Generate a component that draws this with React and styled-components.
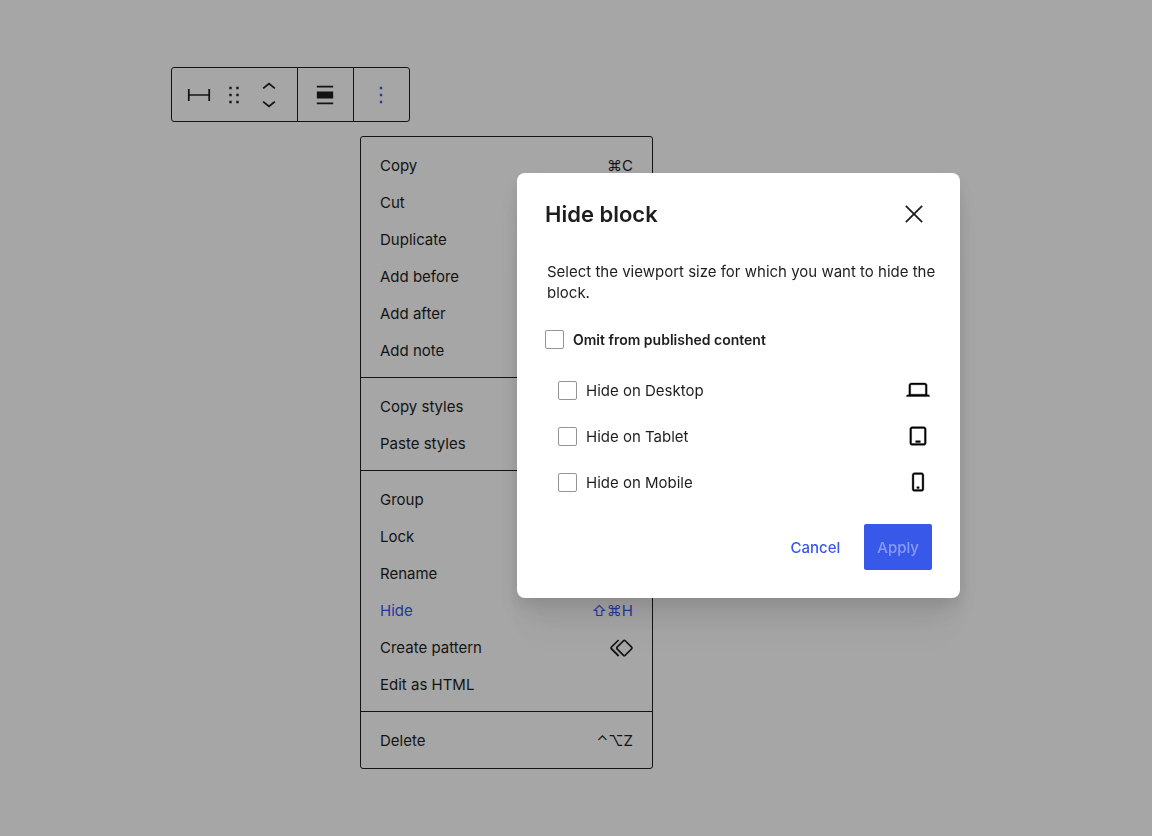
import React, { useState } from "react";
import styled, { createGlobalStyle } from "styled-components";

const GlobalStyle = createGlobalStyle`
  * {
    box-sizing: border-box;
  }

  body {
    margin: 0;
    background-color: #ffffff;
    color: #1e1e1e;
    font-family: Inter, "Liberation Sans", "DejaVu Sans", sans-serif;
    font-size: 15px;
  }

  button, input {
    font: inherit;
    color: inherit;
  }
`;

const Page = styled.main`
  min-height: 100vh;
  padding: 67px 24px 67px 171px;
`;

const Toolbar = styled.div`
  display: flex;
  width: fit-content;
  border: 1px solid #1e1e1e;
  border-radius: 3px;
`;

const ToolbarGroup = styled.div`
  display: flex;
  align-items: center;
  gap: 7px;
  height: 53px;
  padding: 0 14px 0 13px;

  & + & {
    border-left: 1px solid #1e1e1e;
  }
`;

const IconButton = styled.button`
  display: flex;
  padding: 0;
  border: none;
  background: none;
  color: ${({ $active }) => ($active ? "#3858e9" : "inherit")};
  cursor: pointer;
`;

const Movers = styled.div`
  display: flex;
  flex-direction: column;
  gap: 4px;
`;

const Menu = styled.div`
  width: 293px;
  max-width: 100%;
  margin: 14px 0 0 189px;
  border: 1px solid #1e1e1e;
  border-radius: 3px;
`;

const MenuGroup = styled.div`
  padding: 10px 0 8px;

  & + & {
    border-top: 1px solid #1e1e1e;
  }

  &:last-child {
    padding-bottom: 9px;
  }
`;

const MenuItem = styled.button`
  display: flex;
  align-items: center;
  justify-content: space-between;
  width: 100%;
  height: 37px;
  padding: 0 19px;
  border: none;
  background: none;
  color: ${({ $active }) => ($active ? "#3858e9" : "inherit")};
  text-align: left;
  cursor: pointer;
`;

const Overlay = styled.div`
  position: fixed;
  inset: 0;
  display: flex;
  align-items: flex-start;
  padding: 173px 24px 24px 517px;
  background-color: rgba(0, 0, 0, 0.35);
`;

const Dialog = styled.section`
  flex: 0 1 443px;
  padding: 27px 28px 28px;
  border-radius: 8px;
  background-color: #ffffff;
  box-shadow:
    0 5px 15px rgba(0, 0, 0, 0.08),
    0 15px 27px rgba(0, 0, 0, 0.07),
    0 30px 36px rgba(0, 0, 0, 0.04),
    0 50px 43px rgba(0, 0, 0, 0.02);
`;

const DialogHeader = styled.header`
  display: flex;
  align-items: center;
  justify-content: space-between;
  padding-right: 4px;
`;

const DialogTitle = styled.h2`
  margin: 0;
  font-size: 22px;
  font-weight: 600;
  line-height: 28px;
`;

const Description = styled.p`
  margin: 33px -8px 26px 0;
  padding-left: 2px;
  line-height: 21px;
`;

const Options = styled.div`
  display: flex;
  flex-direction: column;
  padding: 17px 0 19px 13px;
`;

const OptionRow = styled.div`
  display: flex;
  align-items: center;
  justify-content: space-between;
  height: 46px;
`;

const CheckLabel = styled.label`
  display: flex;
  align-items: center;
  gap: 9px;
  font-size: ${({ $bold }) => ($bold ? "14px" : "15px")};
  font-weight: ${({ $bold }) => ($bold ? 600 : 400)};
  line-height: 21px;
`;

const Checkbox = styled.input`
  appearance: none;
  width: 19px;
  height: 19px;
  margin: 0;
  border: 1px solid #949494;
  border-radius: 2px;
  background-color: #ffffff;

  &:checked {
    border-color: #3858e9;
    background-color: #3858e9;
  }
`;

const DialogFooter = styled.footer`
  display: flex;
  justify-content: flex-end;
  gap: 11px;
`;

const Button = styled.button`
  height: 46px;
  padding: 0 13px;
  border: none;
  border-radius: 2px;
  background-color: ${({ $primary }) => ($primary ? "#3858e9" : "transparent")};
  color: ${({ $primary }) => ($primary ? "#ffffff" : "#3858e9")};
  font-weight: 500;

  &:disabled {
    color: rgba(255, 255, 255, 0.4);
  }
`;

const DeviceIcon = styled.span`
  display: flex;
  color: #000000;
  stroke: currentColor;
  stroke-width: 0.3;
`;

const icons = {
  width: "M2.5 6.8H4v4.5h16V6.8h1.5v10.4H20v-4.5H4v4.5H2.5z",
  drag: "M8 7h2V5H8v2zm0 6h2v-2H8v2zm0 6h2v-2H8v2zm6-14v2h2V5h-2zm0 8h2v-2h-2v2zm0 6h2v-2h-2v2z",
  up: "M6.5 12.4L12 8l5.5 4.4-.9 1.2L12 10l-4.5 3.6-1-1.2z",
  down: "M17.5 11.6L12 16l-5.5-4.4.9-1.2L12 14l4.5-3.6 1 1.2z",
  align: "M19 5.5H5V4h14v1.5ZM19 20H5v-1.5h14V20ZM5 9h14v6H5V9Z",
  more: "M13 19h-2v-2h2v2zm0-6h-2v-2h2v2zm0-6h-2V5h2v2z",
  close:
    "m13.06 12 6.47-6.47-1.06-1.06L12 10.94 5.53 4.47 4.47 5.53 10.94 12l-6.47 6.47 1.06 1.06L12 13.06l6.47 6.47 1.06-1.06L13.06 12Z",
  desktop:
    "M20.5 16h-.7V8c0-1.1-.9-2-2-2H6.2c-1.1 0-2 .9-2 2v8h-.7c-.8 0-1.5.7-1.5 1.5h20c0-.8-.7-1.5-1.5-1.5zM5.7 8c0-.3.2-.5.5-.5h11.6c.3 0 .5.2.5.5v7.6H5.7V8z",
  tablet:
    "M17 4H7c-1.1 0-2 .9-2 2v12c0 1.1.9 2 2 2h10c1.1 0 2-.9 2-2V6c0-1.1-.9-2-2-2zm.5 14c0 .3-.2.5-.5.5H7c-.3 0-.5-.2-.5-.5V6c0-.3.2-.5.5-.5h10c.3 0 .5.2.5.5v12zm-7.5-.5h4V16h-4v1.5z",
  mobile:
    "M15 4H9c-1.1 0-2 .9-2 2v12c0 1.1.9 2 2 2h6c1.1 0 2-.9 2-2V6c0-1.1-.9-2-2-2zm.5 14c0 .3-.2.5-.5.5H9c-.3 0-.5-.2-.5-.5V6c0-.3.2-.5.5-.5h6c.3 0 .5.2.5.5v12zm-4.5-.5h2V16h-2v1.5z",
  pattern:
    "M21.3 10.8l-5.6-5.6c-.7-.7-1.8-.7-2.5 0l-5.6 5.6c-.7.7-.7 1.8 0 2.5l5.6 5.6c.3.3.8.5 1.2.5s.9-.2 1.2-.5l5.6-5.6c.8-.7.8-1.9.1-2.5zm-1 1.4l-5.6 5.6c-.1.1-.3.1-.4 0l-5.6-5.6c-.1-.1-.1-.3 0-.4l5.6-5.6s.1-.1.2-.1.1 0 .2.1l5.6 5.6c.1.1.1.3 0 .4zm-16.6-.4L10 5.5l-1-1-6.3 6.3c-.7.7-.7 1.8 0 2.5L9 19.5l1.1-1.1-6.3-6.3c-.2 0-.2-.2-.1-.3z",
};

function Icon({ name, viewBox = "0 0 24 24", width = 28, height = 28 }) {
  return (
    <svg width={width} height={height} viewBox={viewBox} fill="currentColor" aria-hidden="true">
      <path d={icons[name]} />
    </svg>
  );
}

const menuGroups = [
  [
    { label: "Copy", shortcut: "⌘C" },
    { label: "Cut" },
    { label: "Duplicate" },
    { label: "Add before" },
    { label: "Add after" },
    { label: "Add note" },
  ],
  [{ label: "Copy styles" }, { label: "Paste styles" }],
  [
    { label: "Group" },
    { label: "Lock" },
    { label: "Rename" },
    { label: "Hide", shortcut: "⇧⌘H", active: true },
    { label: "Create pattern", icon: "pattern" },
    { label: "Edit as HTML" },
  ],
  [{ label: "Delete", shortcut: "⌃⌥Z" }],
];

const devices = [
  { id: "desktop", label: "Hide on Desktop" },
  { id: "tablet", label: "Hide on Tablet" },
  { id: "mobile", label: "Hide on Mobile" },
];

function BlockToolbar() {
  return (
    <Toolbar role="toolbar" aria-label="Block tools">
      <ToolbarGroup>
        <IconButton aria-label="Spacer">
          <Icon name="width" />
        </IconButton>
        <IconButton aria-label="Drag">
          <Icon name="drag" />
        </IconButton>
        <Movers>
          <IconButton aria-label="Move up">
            <Icon name="up" viewBox="0 5 24 12" height={14} />
          </IconButton>
          <IconButton aria-label="Move down">
            <Icon name="down" viewBox="0 7 24 12" height={14} />
          </IconButton>
        </Movers>
      </ToolbarGroup>
      <ToolbarGroup>
        <IconButton aria-label="Align">
          <Icon name="align" />
        </IconButton>
      </ToolbarGroup>
      <ToolbarGroup>
        <IconButton aria-label="Options" $active>
          <Icon name="more" />
        </IconButton>
      </ToolbarGroup>
    </Toolbar>
  );
}

function BlockMenu() {
  return (
    <Menu role="menu">
      {menuGroups.map((group) => (
        <MenuGroup key={group[0].label} role="group">
          {group.map(({ label, shortcut, icon, active }) => (
            <MenuItem key={label} role="menuitem" $active={active}>
              <span>{label}</span>
              {shortcut && <span>{shortcut}</span>}
              {icon && <Icon name={icon} viewBox="2 0 20 24" width={23} />}
            </MenuItem>
          ))}
        </MenuGroup>
      ))}
    </Menu>
  );
}

function HideDialog() {
  const [checked, setChecked] = useState({});
  const toggle = (id) => setChecked({ ...checked, [id]: !checked[id] });
  const canApply = Object.values(checked).some(Boolean);

  return (
    <Dialog role="dialog" aria-labelledby="hide-title">
      <DialogHeader>
        <DialogTitle id="hide-title">Hide block</DialogTitle>
        <IconButton aria-label="Close">
          <Icon name="close" />
        </IconButton>
      </DialogHeader>
      <Description>
        Select the viewport size for which you want to hide the block.
      </Description>
      <CheckLabel $bold>
        <Checkbox type="checkbox" checked={!!checked.all} onChange={() => toggle("all")} />
        Omit from published content
      </CheckLabel>
      <Options>
        {devices.map(({ id, label }) => (
          <OptionRow key={id}>
            <CheckLabel>
              <Checkbox type="checkbox" checked={!!checked[id]} onChange={() => toggle(id)} />
              {label}
            </CheckLabel>
            <DeviceIcon>
              <Icon name={id} />
            </DeviceIcon>
          </OptionRow>
        ))}
      </Options>
      <DialogFooter>
        <Button>Cancel</Button>
        <Button $primary disabled={!canApply}>
          Apply
        </Button>
      </DialogFooter>
    </Dialog>
  );
}

function App() {
  return (
    <>
      <GlobalStyle />
      <Page>
        <BlockToolbar />
        <BlockMenu />
      </Page>
      <Overlay>
        <HideDialog />
      </Overlay>
    </>
  );
}

export default App;
